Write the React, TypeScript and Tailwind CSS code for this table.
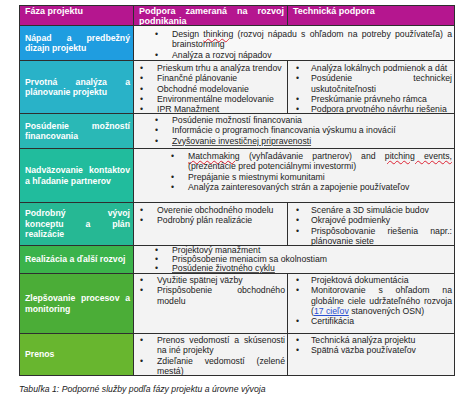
const cell = "border-r border-b border-[#2e2e2e] overflow-hidden";
const phase = `${cell} flex items-center pl-[5px] pr-[3px] text-white font-bold text-[8.7px] leading-[10.5px] text-justify`;
const body = `${cell} bg-[#f3f3f3] pt-[1px] pr-[2px] text-[8.7px] leading-[10.3px] text-[#222]`;
const bodyTight = `${cell} bg-[#f3f3f3] pr-[2px] text-[8.7px] leading-[9.1px] text-[#222]`;

const Item = ({ children, w = "w-[17px]" }: { children: React.ReactNode; w?: string }) => (
  <div className="flex">
    <span className={`${w} shrink-0`}>•</span>
    <span className="flex-1 text-justify">{children}</span>
  </div>
);

const Spell = ({ children }: { children: React.ReactNode }) => (
  <span className="underline decoration-wavy decoration-[#d23] decoration-1 underline-offset-1">{children}</span>
);

const Marked = ({ children }: { children: React.ReactNode }) => (
  <span className="underline decoration-[#555] decoration-1 underline-offset-1">{children}</span>
);

const App = () => {
  return (
    <div className="bg-white w-[474px] h-[408px] pt-[5px] pl-[19px] font-['Liberation_Sans',Arial,sans-serif]">
      <div className="grid w-[436px] grid-cols-[114px_154px_167px] grid-rows-[20px_35px_53px_35px_54px_43px_28px_60px_42px] border-l border-t border-[#2e2e2e]">
        {/* header */}
        <div className={`${cell} bg-[#b5168f] text-white font-bold text-[9px] leading-[9.8px] pl-[5px] pt-[1px]`}>Fáza projektu</div>
        <div className={`${cell} bg-[#b5168f] text-white font-bold text-[9px] leading-[9.8px] pl-[5px] pr-[3px] pt-[1px] text-justify`}>
          Podpora zameraná na rozvoj podnikania
        </div>
        <div className={`${cell} bg-[#b5168f] text-white font-bold text-[9px] leading-[9.8px] pl-[5px] pt-[1px]`}>Technická podpora</div>

        {/* Nápad */}
        <div className={`${phase} bg-[#1f9de0]`}><span className="w-full">Nápad a predbežný dizajn projektu</span></div>
        <div className={`${body} col-span-2 bg-[#f8f8f8] pl-[21px] pt-[3px]`}>
          <Item>Design <Spell>thinking</Spell> (rozvoj nápadu s ohľadom na potreby používateľa) a brainstorming</Item>
          <Item>Analýza a rozvoj nápadov</Item>
        </div>

        {/* Prvotná */}
        <div className={`${phase} bg-[#29b2c8]`}><span className="w-full">Prvotná analýza a plánovanie projektu</span></div>
        <div className={`${body} pl-[6px] pt-[2px]`}>
          <Item>Prieskum trhu a analýza trendov</Item>
          <Item>Finančné plánovanie</Item>
          <Item>Obchodné modelovanie</Item>
          <Item>Environmentálne modelovanie</Item>
          <Item>IPR Manažment</Item>
        </div>
        <div className={`${body} pl-[8px] pt-[2px]`}>
          <Item w="w-[15px]">Analýza lokálnych podmienok a dát</Item>
          <Item w="w-[15px]">Posúdenie technickej uskutočniteľnosti</Item>
          <Item w="w-[15px]">Preskúmanie právneho rámca</Item>
          <Item w="w-[15px]">Podpora prvotného návrhu riešenia</Item>
        </div>

        {/* Posúdenie */}
        <div className={`${phase} bg-[#2ab8b6]`}><span className="w-full">Posúdenie možností financovania</span></div>
        <div className={`${body} col-span-2 pl-[21px]`}>
          <Item>Posúdenie možností financovania</Item>
          <Item>Informácie o programoch financovania výskumu a inovácií</Item>
          <Item><Marked>Zvyšovanie investičnej pripravenosti</Marked></Item>
        </div>

        {/* Nadväzovanie */}
        <div className={`${phase} bg-[#21bc9d]`}><span className="w-full">Nadväzovanie kontaktov a hľadanie partnerov</span></div>
        <div className={`${body} col-span-2 pl-[37px] pt-[2px]`}>
          <Item>
            <Spell>Matchmaking</Spell> (vyhľadávanie partnerov) and <Spell>pitching events,</Spell> (prezentácie pred potenciálnymi investormi)
          </Item>
          <Item>Prepájanie s miestnymi komunitami</Item>
          <Item>Analýza zainteresovaných strán a zapojenie používateľov</Item>
        </div>

        {/* Podrobný */}
        <div className={`${phase} bg-[#26b894]`}><span className="w-full">Podrobný vývoj konceptu a plán realizácie</span></div>
        <div className={`${body} pl-[6px] pt-[2px]`}>
          <Item>Overenie obchodného modelu</Item>
          <Item>Podrobný plán realizácie</Item>
        </div>
        <div className={`${body} pl-[8px] pt-[2px]`}>
          <Item w="w-[15px]">Scenáre a 3D simulácie budov</Item>
          <Item w="w-[15px]">Okrajové podmienky</Item>
          <Item w="w-[15px]">
            Prispôsobovanie riešenia napr.: <Marked>plánovanie siete</Marked>
          </Item>
        </div>

        {/* Realizácia */}
        <div className={`${phase} bg-[#3bb34b]`}><span className="w-full">Realizácia a ďalší rozvoj</span></div>
        <div className={`${bodyTight} col-span-2 pl-[21px]`}>
          <Item>Projektový manažment</Item>
          <Item>Prispôsobenie meniacim sa okolnostiam</Item>
          <Item><Marked>Posúdenie životného cyklu</Marked></Item>
        </div>

        {/* Zlepšovanie */}
        <div className={`${phase} bg-[#4bad37]`}><span className="w-full">Zlepšovanie procesov a monitoring</span></div>
        <div className={`${body} pl-[6px]`}>
          <Item>Využitie spätnej väzby</Item>
          <Item>Prispôsobenie obchodného modelu</Item>
        </div>
        <div className={`${body} pl-[8px]`}>
          <Item w="w-[15px]">Projektová dokumentácia</Item>
          <Item w="w-[15px]">
            Monitorovanie s ohľadom na globálne ciele udržateľného rozvoja{" "}
            (<span className="text-[#2a4fd0] underline">17 cieľov</span> stanovených OSN)
          </Item>
          <Item w="w-[15px]">Certifikácia</Item>
        </div>

        {/* Prenos */}
        <div className={`${phase} bg-[#68b62f]`}><span className="w-full">Prenos</span></div>
        <div className={`${body} pl-[6px]`}>
          <Item>Prenos vedomostí a skúsenosti na iné projekty</Item>
          <Item>Zdieľanie vedomostí (zelené mestá)</Item>
        </div>
        <div className={`${body} pl-[8px]`}>
          <Item w="w-[15px]">Technická analýza projektu</Item>
          <Item w="w-[15px]">Spätná väzba používateľov</Item>
        </div>
      </div>

      <p className="mt-[8px] text-[8.7px] leading-[10px] italic text-[#222]">
        Tabuľka 1: Podporné služby podľa fázy projektu a úrovne vývoja
      </p>
    </div>
  );
};

export default App;
